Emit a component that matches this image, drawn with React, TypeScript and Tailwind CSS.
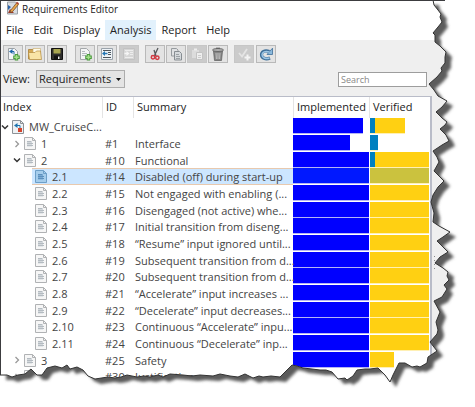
import React from "react";

type Bar = { color: string; width: number };
type Row = {
  index: string;
  id: string;
  summary: string;
  level: number;
  chevron?: "open" | "closed";
  selected?: boolean;
  implemented: number;
  verified: Bar[];
};

const TEAL = "#0080c0";
const YELLOW = "#ffd012";
const full: Bar[] = [{ color: YELLOW, width: 100 }];

const leaf = (index: string, id: string, summary: string): Row => ({
  index,
  id,
  summary,
  level: 2,
  implemented: 100,
  verified: full,
});

const rows: Row[] = [
  { index: "MW_CruiseC...", id: "", summary: "", level: 0, chevron: "open", implemented: 92, verified: [{ color: TEAL, width: 9 }, { color: YELLOW, width: 51 }] },
  { index: "1", id: "#1", summary: "Interface", level: 1, chevron: "closed", implemented: 75, verified: [{ color: TEAL, width: 13 }] },
  { index: "2", id: "#10", summary: "Functional", level: 1, chevron: "open", implemented: 100, verified: [{ color: TEAL, width: 9 }, { color: YELLOW, width: 91 }] },
  { ...leaf("2.1", "#14", "Disabled (off) during start-up"), selected: true, verified: [{ color: "#cbc23e", width: 100 }] },
  leaf("2.2", "#15", "Not engaged with enabling (..."),
  leaf("2.3", "#16", "Disengaged (not active) whe..."),
  leaf("2.4", "#17", "Initial transition from diseng..."),
  leaf("2.5", "#18", "“Resume” input ignored until..."),
  leaf("2.6", "#19", "Subsequent transition from d..."),
  leaf("2.7", "#20", "Subsequent transition from d..."),
  leaf("2.8", "#21", "“Accelerate” input increases ..."),
  leaf("2.9", "#22", "“Decelerate” input decreases..."),
  leaf("2.10", "#23", "Continuous “Accelerate” inpu..."),
  leaf("2.11", "#24", "Continuous “Decelerate” inp..."),
  { index: "3", id: "#25", summary: "Safety", level: 1, chevron: "closed", implemented: 100, verified: [{ color: YELLOW, width: 40 }] },
  { index: "4", id: "#30", summary: "Justifications", level: 1, chevron: "closed", implemented: 0, verified: [] },
];

const EDGE =
  "M433 0 L434 5 L438 10 L441 14 L440 17 L442 22 L438 27 L433 33 L435 35 L435 42 L440 46 L446 52 L445 57 L445 63 L441 68 L442 71 L437 77 L429 84 L434 90 L438 96 L447 101 L442 107 L436 112 L442 118 L447 122 L445 125 L440 129 L446 135 L449 141 L442 145 L433 151 L437 157 L439 162 L434 171 L444 181 L438 187 L433 195 L431 202 L434 213 L433 222 L439 226 L450 232 L443 237 L437 241 L443 247 L448 252 L440 257 L435 263 L443 268 L448 272 L447 276 L449 280 L444 285 L447 289 L442 297 L434 301 L440 312 L436 322 L438 330 L437 334 L430 342 L437 351 L428 357 L427 363 L420 367 L417 366 L412 367 L405 363 L399 363 L393 375 L390 382 L385 375 L378 368 L370 369 L365 369 L357 370 L353 376 L347 380 L345 378 L338 379 L332 372 L326 370 L320 370 L312 369 L303 368 L297 366 L292 365 L288 369 L280 377 L271 376 L263 377 L259 376 L253 378 L245 374 L238 377 L230 376 L220 374 L213 376 L200 375 L192 376 L183 375 L170 374 L163 377 L158 375 L150 377 L144 376 L137 377 L127 375 L121 377 L115 378 L108 377 L95 379 L88 376 L83 370 L77 367 L70 369 L67 365 L62 368 L55 366 L47 368 L42 375 L37 375 L31 369 L25 374 L18 375 L12 377 L7 375 L0 375";

function TornEdge() {
  return (
    <svg aria-hidden="true" viewBox="0 0 475 407" preserveAspectRatio="none" className="pointer-events-none absolute inset-0 h-full w-full">
      <defs>
        <clipPath id="outside">
          <path d={`${EDGE} L0 407 L475 407 L475 0 Z`} />
        </clipPath>
        <filter id="soft" x="-5%" y="-5%" width="110%" height="110%">
          <feGaussianBlur stdDeviation="1.6" />
        </filter>
      </defs>
      <path d="M434.500 256v16" stroke="#8a8a8a" strokeDasharray="1 3" />
      <g clipPath="url(#outside)">
        <rect width="475" height="407" fill="#fff" />
        <path d={`${EDGE} L8 0 Z`} transform="translate(6 5)" fill="#5c5c5c" filter="url(#soft)" />
      </g>
      <path d={EDGE} fill="none" stroke="#333" strokeWidth="1" />
      <path d="M0 .5 H445" stroke="#3c3c3f" />
      <path d="M.5 0 V375" stroke="#3c3c3f" />
    </svg>
  );
}

function DocIcon({ selected }: { selected?: boolean }) {
  const edge = selected ? "#6d9fc8" : "#b0b2b4";
  return (
    <svg viewBox="0 0 12 13" className="h-[13px] w-3 shrink-0">
      <path d="M.5 .5h8l3 3v9H.5z" fill={selected ? "#a5cdec" : "#f6f6f6"} stroke={edge} />
      <path d="M8.500 .5v3h3" fill="none" stroke={edge} />
      <path d="M3 4h5v5.500H3z" fill={selected ? "#79aad4" : "#d3d8dc"} />
      <path d="M3 4.500h4M3 6.500h6M3 8.500h6" stroke={selected ? "#5b8fbd" : "#b4bbc1"} />
    </svg>
  );
}

function ModelIcon() {
  return (
    <svg viewBox="0 0 12 14" className="h-3.5 w-3 shrink-0">
      <path d="M.5 .5h8l3 3v10H.5z" fill="#eef1f3" stroke="#8d9297" />
      <path d="M8.500 .5v3h3" fill="none" stroke="#8d9297" />
      <path d="M2 5.500l3.500-2.500v5z" fill="#1c73ae" />
      <path d="M5 5.500h3v3" fill="none" stroke="#1c73ae" />
      <rect x="6" y="8" width="4" height="4" fill="#d5452c" />
    </svg>
  );
}

function Chevron({ kind }: { kind?: "open" | "closed" }) {
  return (
    <svg viewBox="0 0 8 8" className="size-2 shrink-0">
      {kind === "open" && <path d="M1 2.500l3 3 3-3" fill="none" stroke="#333" strokeWidth="1.500" />}
      {kind === "closed" && <path d="M2.500 1l3 3-3 3" fill="none" stroke="#999" strokeWidth="1.300" />}
    </svg>
  );
}

function AppIcon() {
  return (
    <svg viewBox="0 0 13 14" className="h-3.5 w-[13px] shrink-0">
      <path d="M1.500 1h8l2 2v10h-10z" fill="#d8dce1" stroke="#9aa0a6" />
      <path d="M2 4l3 2-3 3z" fill="#2a62a8" />
      <path d="M2 12l2-4 4 4z" fill="#a03a2a" />
      <path d="M4.500 9.500L10.500 2l2 1.500-6 7.200-2.500.8z" fill="#e9a64a" stroke="#6a4526" strokeWidth=".7" />
      <path d="M10 2l1-1.200 2 1.500-.8 1.200z" fill="#b2402f" />
    </svg>
  );
}

const plus = <path d="M10.500 7v6.500M7.200 10.200h6.600" stroke="#4a9a3c" strokeWidth="3.400" />;
const plusCore = <path d="M10.500 8v4.500M8.200 10.200h4.600" stroke="#a4e08b" strokeWidth="1.600" />;

const icons: Record<string, React.ReactNode> = {
  "New requirement set": (
    <>
      <path d="M2.500 1.500h6l3 3v8h-9z" fill="#f4f6f8" stroke="#9ba0a5" />
      <path d="M3 4.500l3.500-2.500v5z" fill="#1c66a8" />
      <path d="M6 4.500h2v3" fill="none" stroke="#1c66a8" />
      {plus}
      {plusCore}
    </>
  ),
  Open: (
    <>
      <path d="M.5 2.500h5l1 1.500h6v8H.5z" fill="#d6aa55" stroke="#a87f35" strokeWidth=".8" />
      <path d="M5 1.500h7.500v8H5z" fill="#fffbe8" stroke="#c7a766" strokeWidth=".6" />
      <path d="M.5 5.500H7l1.500-1.500h4l1 8.500H1.500z" fill="#f9e4a6" stroke="#b58b3e" strokeWidth=".7" />
    </>
  ),
  Save: (
    <>
      <path d="M1.500 1.500h11v11h-11z" fill="#2e2e2c" stroke="#111" />
      <path d="M3.500 2h7v4.500h-7z" fill="#a8a650" />
      <path d="M4 8.500h6v4H4z" fill="#111" />
      <path d="M8 9.500h1.500v2.500H8z" fill="#eee" />
    </>
  ),
  "Add requirement": (
    <>
      <path d="M2.500 1.500h6l3 3v8h-9z" fill="#f4f5f6" stroke="#a3a7aa" />
      <path d="M4 4.500h3M4 6.500h5M4 8.500h4" stroke="#b5bbc0" />
      {plus}
      {plusCore}
    </>
  ),
  Promote: (
    <>
      <path d="M1.500 1.500h11v11h-11z" fill="#eef3f7" stroke="#9aa3ab" />
      <path d="M3 3.500h8M8 5.500h3M8 7.500h3M3 10.500h8" stroke="#4b555d" />
      <path d="M2 6.500L5 4v1.700h2.500v1.600H5V9z" fill="#2477b5" />
    </>
  ),
  Demote: (
    <>
      <path d="M1.500 1.500h11v11h-11z" fill="#d6d6d6" stroke="#c2c2c2" />
      <path d="M3 3.500h8M8 5.500h3M8 7.500h3M3 10.500h8" stroke="#ededed" />
      <path d="M7.500 6.500L4.500 4v1.700H2.500v1.600h2V9z" fill="#f5f5f5" />
    </>
  ),
  Cut: (
    <>
      <path d="M10 1L6.300 9M6 3L8 9" stroke="#55595c" strokeWidth="1.300" />
      <circle cx="5" cy="10.300" r="1.700" fill="none" stroke="#d13b43" strokeWidth="1.500" />
      <circle cx="9.300" cy="10.800" r="1.700" fill="none" stroke="#d13b43" strokeWidth="1.500" />
    </>
  ),
  Copy: (
    <>
      <path d="M2.500 1.500h5l1.500 1.500v6h-6.500z" fill="#dfe1e3" stroke="#969b9f" />
      <path d="M5.500 4.500h5l2 2v6.500h-7z" fill="#d5d9dc" stroke="#878d92" />
      <path d="M7 7.500h3M7 9.500h4M7 11.500h4" stroke="#9ba1a5" />
    </>
  ),
  Paste: (
    <>
      <path d="M2 3h7v8H2z" fill="#dcdcdc" />
      <path d="M4 1.500h3v2H4z" fill="#ededed" />
      <path d="M6.500 5.500h6v7h-6z" fill="#eee" stroke="#c3c3c3" />
      <path d="M8 8.500h3M8 10.500h3" stroke="#ccc" />
    </>
  ),
  Delete: (
    <>
      <path d="M2.500 4h9l-1 9.500h-7z" fill="#858585" stroke="#5c5c5c" strokeWidth=".7" />
      <ellipse cx="7" cy="3" rx="5.500" ry="1.500" fill="#b0b0b0" stroke="#5c5c5c" strokeWidth=".8" />
      <path d="M5 1.200h4" stroke="#5c5c5c" />
      <path d="M5 6l.4 6M7 6v6M9 6l-.4 6" stroke="#c0c0c0" />
    </>
  ),
  Check: (
    <>
      <path d="M2 6l3 3.500L10 2" fill="none" stroke="#e4e4e4" strokeWidth="1.800" />
      <path d="M10.500 7.500v6M7.500 10.500h6" stroke="#f4f4f4" strokeWidth="2" />
    </>
  ),
  Refresh: (
    <>
      <path d="M11 11C6.500 13 2.500 11 2.500 7.800S5.500 3 10.500 4.500" fill="none" stroke="#3f6f99" strokeWidth="3.200" />
      <path d="M8 7.500h5.500V1.200z" fill="#8bb9dc" stroke="#3f6f99" strokeWidth=".8" />
      <path d="M10.500 11C6.500 12.500 3 10.500 3 7.800S6 3.600 10.500 5" fill="none" stroke="#9cc5e4" strokeWidth="1.500" />
    </>
  ),
};

const disabledTools = ["Demote", "Paste", "Check"];

function ToolGroup({ names, className }: { names: string[]; className: string }) {
  return (
    <div className={`flex ${className}`}>
      {names.map((name) => {
        const off = disabledTools.includes(name);
        return (
          <button
            key={name}
            type="button"
            aria-label={name}
            disabled={off}
            className={`flex h-[18px] w-5 items-center justify-center border ${off ? "border-[#c6c6c6] bg-[#cbcbcb]" : "border-[#b9b9b9] bg-[#e3e3e3]"}`}
          >
            <svg viewBox="0 0 14 14" className="size-3.5 shrink-0">
              {icons[name]}
            </svg>
          </button>
        );
      })}
    </div>
  );
}

const indents = ["pl-0", "pl-3", "pl-[23px]"];

export default function App() {
  return (
    <div className="relative h-screen w-full overflow-hidden bg-[#efefef] pl-px pt-px font-['Open_Sans','Noto_Sans',sans-serif] text-[11px] text-[#222]">
      <header className="bg-white">
        <div className="flex h-[19px] items-start gap-[3px] pl-[5px] pr-12">
          <AppIcon />
          <h1 className="text-[10px] leading-4">Requirements Editor</h1>
        </div>
        <nav className="flex h-5 items-stretch">
          {["File", "Edit", "Display", "Analysis", "Report", "Help"].map((item) => (
            <button
              key={item}
              type="button"
              className={`px-[5px] leading-5 ${item === "Analysis" ? "bg-[#e2f1fc]" : ""}`}
            >
              {item}
            </button>
          ))}
        </nav>
      </header>

      <div className="flex h-[30px] items-start pl-0.5 pt-[5px]">
        <ToolGroup names={["New requirement set", "Open", "Save"]} className="gap-0.5" />
        <ToolGroup names={["Add requirement", "Promote", "Demote"]} className="ml-2 gap-0.5" />
        <ToolGroup names={["Cut", "Copy", "Paste", "Delete"]} className="ml-1.5 gap-px" />
        <ToolGroup names={["Check", "Refresh"]} className="ml-1.5 gap-0.5" />
      </div>

      <div className="flex h-[26px] items-start pl-0.5 pr-12">
        <label htmlFor="view" className="w-[33px] leading-[18px]">
          View:
        </label>
        <div className="relative">
          <select id="view" className="block h-[18px] w-[89px] appearance-none border border-[#adadad] bg-[#e4e4e4] pl-0.5 leading-4">
            <option>Requirements</option>
          </select>
          <svg viewBox="0 0 5 3" className="pointer-events-none absolute right-1 top-2 h-[3px] w-[5px]">
            <path d="M0 0h5L2.500 3z" fill="#111" />
          </svg>
        </div>
        <input
          type="text"
          aria-label="Search"
          placeholder="Search"
          className="ml-auto mt-0.5 h-[15px] w-[89px] border border-[#9d9d9d] bg-white px-0.5 text-[9px] leading-3 placeholder:text-[#888]"
        />
      </div>

      <main className="mr-[43px] border-r-2 border-t border-[#b9bcc8] bg-white">
        <table className="w-full table-fixed border-collapse whitespace-nowrap text-left">
          <colgroup>
            <col className="w-[101px]" />
            <col className="w-[31px]" />
            <col />
            <col className="w-[76px]" />
            <col className="w-[61px]" />
          </colgroup>
          <thead className="text-[#222]">
            <tr className="h-[21px]">
              {["Index", "ID", "Summary", "Implemented", "Verified"].map((name, i) => (
                <th key={name} className="p-0 font-normal">
                  <div className={`h-[21px] leading-5 ${i === 0 ? "pl-0.5" : "border-l border-[#e4e4e4] pl-[3px]"}`}>{name}</div>
                </th>
              ))}
            </tr>
          </thead>
          <tbody className="text-[#444]">
            {rows.map((row) => {
              const line = row.selected ? "h-[17px] border-y border-[#e8c9ae] bg-[#cce6ff]" : "";
              return (
                <tr key={row.index} className="h-[17px] [&:nth-child(3n)]:h-4">
                  <td className="p-0">
                    <div className={`flex items-center leading-[15px] ${indents[row.level]}`}>
                      <Chevron kind={row.chevron} />
                      <div className={`flex grow items-center gap-[5px] pl-[3px] ${line}`}>
                        {row.level === 0 ? <ModelIcon /> : <DocIcon selected={row.selected} />}
                        {row.index}
                      </div>
                    </div>
                  </td>
                  <td className="p-0">
                    <div className={`pl-[3px] leading-[15px] ${line}`}>{row.id}</div>
                  </td>
                  <td className="p-0">
                    <div className={`pl-0.5 leading-[15px] ${line}`}>{row.summary}</div>
                  </td>
                  <td className="p-0 align-top">
                    <div className="h-4">
                      <div
                        className={`h-full border-b border-[#b4b4f4] ${row.selected ? "bg-[#0018ff]" : "bg-[#0000ff]"}`}
                        style={{ width: `${row.implemented}%` }}
                      />
                    </div>
                  </td>
                  <td className="p-0 align-top">
                    <div className="flex h-4 px-px">
                      {row.verified.map((bar) => (
                        <div key={bar.color} className="h-full border-b border-[#fff0b4]" style={{ width: `${bar.width}%`, backgroundColor: bar.color }} />
                      ))}
                    </div>
                  </td>
                </tr>
              );
            })}
          </tbody>
        </table>
      </main>

      <TornEdge />
    </div>
  );
}
